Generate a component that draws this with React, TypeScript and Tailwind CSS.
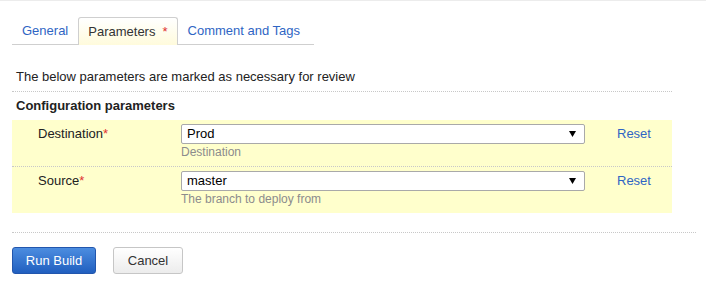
import React from 'react';

const font = { fontFamily: '"Liberation Sans", Arial, sans-serif' };

interface ParamRowProps {
  label: string;
  value: string;
  hint: string;
  last?: boolean;
}

function Caret() {
  return (
    <svg width="7" height="6" viewBox="0 0 7 6" className="shrink-0">
      <polygon points="0,0 7,0 3.5,6" fill="#000" />
    </svg>
  );
}

function ParamRow({ label, value, hint, last }: ParamRowProps) {
  return (
    <div
      className={`flex items-start pt-[4px] pb-[7px] ${
        last ? '' : 'border-b border-dotted border-[#c8c8c8]'
      }`}
    >
      <div className="w-[169px] shrink-0 pl-[26px] leading-[20px] text-[13px] text-[#222]">
        {label}
        <span className="text-[#e03030]">*</span>
      </div>
      <div className="w-[404px] shrink-0">
        <div className="flex h-[20px] items-center justify-between rounded-[2px] border border-[#a9a9a9] bg-white pl-[5px] pr-[8px] text-[13px] text-[#000]">
          <span className="leading-[18px]">{value}</span>
          <Caret />
        </div>
        <div className="mt-[1px] text-[12px] leading-[14px] text-[#8c8c8c]">{hint}</div>
      </div>
      <a className="ml-[32px] cursor-pointer text-[13px] leading-[20px] text-[#2f65c4]">Reset</a>
    </div>
  );
}

export default function App() {
  const tabs = [
    { name: 'General', active: false },
    { name: 'Parameters', active: true },
    { name: 'Comment and Tags', active: false },
  ];

  return (
    <div className="min-h-[290px] w-full border-t border-[#ececec] bg-white" style={font}>
      <div className="px-[12px]">
        {/* Tabs */}
        <div className="mt-[16px] flex h-[28px] w-[302px] items-end border-b border-[#cfcfcf]">
          {tabs.map((t) =>
            t.active ? (
              <div
                key={t.name}
                className="-mb-px flex h-[28px] items-center rounded-t-[3px] border border-b-0 border-[#cfcfcf] bg-gradient-to-b from-white to-[#fffbdc] px-[9px] text-[13px] text-[#333]"
              >
                {t.name}
                <span className="ml-[7px] text-[#e03030]">*</span>
              </div>
            ) : (
              <div
                key={t.name}
                className="flex h-[27px] cursor-pointer items-center px-[10px] text-[13px] text-[#2f65c4]"
              >
                {t.name}
              </div>
            )
          )}
        </div>

        {/* Intro */}
        <div className="w-[660px] border-b border-dotted border-[#c8c8c8] px-[4px] pt-[24px] pb-[6px] text-[13px] leading-[16px] text-[#222]">
          The below parameters are marked as necessary for review
        </div>
        <div className="px-[4px] py-[6px] text-[13px] font-bold leading-[16px] text-[#222]">
          Configuration parameters
        </div>

        {/* Parameters table */}
        <div className="w-[660px] bg-[#ffffcc]">
          <ParamRow label="Destination" value="Prod" hint="Destination" />
          <ParamRow label="Source" value="master" hint="The branch to deploy from" last />
        </div>

        {/* Actions */}
        <div className="mt-[19px] flex w-[684px] gap-[17px] border-t border-dotted border-[#c8c8c8] pt-[14px]">
          <button className="h-[27px] w-[84px] rounded-[3px] border border-[#2256ad] bg-gradient-to-b from-[#4c8de0] to-[#215fbf] text-[13px] text-white">
            Run Build
          </button>
          <button className="h-[27px] w-[70px] rounded-[3px] border border-[#c6c6c6] bg-gradient-to-b from-white to-[#ececec] text-[13px] text-[#333]">
            Cancel
          </button>
        </div>
      </div>
    </div>
  );
}
